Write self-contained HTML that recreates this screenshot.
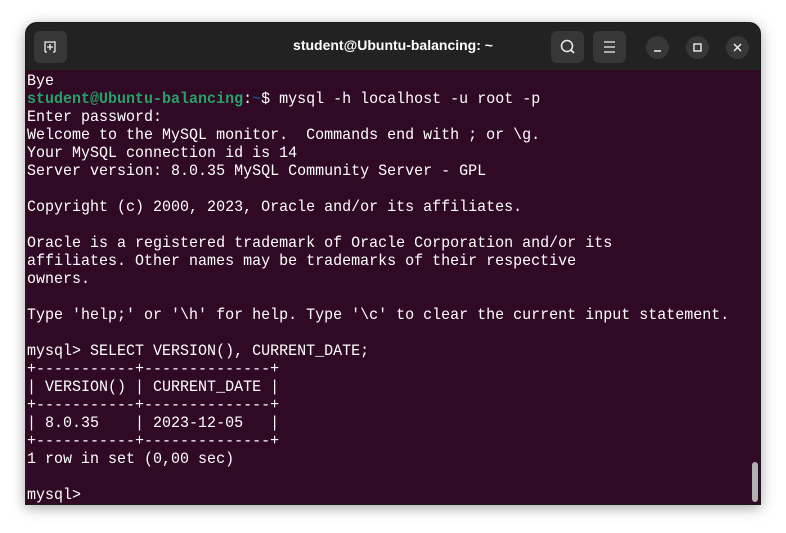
<!DOCTYPE html>
<html><head><style>
html,body{margin:0;padding:0;background:#fff;width:786px;height:533px;overflow:hidden}
.win{position:absolute;left:25px;top:22px;width:736px;height:483px;border-radius:12px 12px 0 0;background:#300a24;box-shadow:0 3px 14px rgba(0,0,0,.35);overflow:hidden;border:1px solid #1a1a1a;box-sizing:border-box}
.hdr{position:absolute;left:0;top:0;right:0;height:47px;background:#222}
.btn{position:absolute;top:8px;width:33px;height:32px;background:#373737;border-radius:6px}
.cb{position:absolute;top:13px;width:23px;height:23px;border-radius:50%;background:#373737}
.title{position:absolute;left:0;right:0;top:14px;text-align:center;color:#fff;font:bold 14px "Liberation Sans",sans-serif}
pre{position:absolute;left:1px;top:49px;margin:0;color:#fff;font:15.55px/18px "Liberation Mono",monospace;transform:scaleX(0.965);transform-origin:0 0}
.g{color:#26a269;font-weight:bold}.b{color:#12488b;font-weight:bold}
.sb{position:absolute;left:726px;top:439px;width:6px;height:40px;border-radius:3px;background:#b0b0b0}
</style></head><body>
<div class="win">
<div class="hdr">
<div class="btn" style="left:8px"><svg width="33" height="32"><path d="M11 21 L11 11 L21 11 L21 21 M13 21 L11 21 M21 21 L19 21 M16 13 V19 M13 16 H19" stroke="#eee" stroke-width="1.3" fill="none"/></svg></div>
<div class="title">student@Ubuntu-balancing: ~</div>
<div class="btn" style="left:525px"><svg width="33" height="32"><circle cx="16" cy="15" r="5.5" stroke="#eee" stroke-width="1.5" fill="none"/><path d="M20 19 L23 22" stroke="#eee" stroke-width="1.6"/></svg></div>
<div class="btn" style="left:567px"><svg width="33" height="32"><path d="M11 11H22M11 16H22M11 21H22" stroke="#eee" stroke-width="1.3"/></svg></div>
<div class="cb" style="left:620px"><svg width="23" height="23"><path d="M8 15H15" stroke="#eee" stroke-width="1.5"/></svg></div>
<div class="cb" style="left:660px"><svg width="23" height="23"><rect x="8" y="8" width="7" height="7" stroke="#eee" stroke-width="1.4" fill="none"/></svg></div>
<div class="cb" style="left:700px"><svg width="23" height="23"><path d="M8 8L15 15M15 8L8 15" stroke="#eee" stroke-width="1.5"/></svg></div>
</div>
<pre>Bye
<span class="g">student@Ubuntu-balancing</span>:<span class="b">~</span>$ mysql -h localhost -u root -p
Enter password: 
Welcome to the MySQL monitor.  Commands end with ; or \g.
Your MySQL connection id is 14
Server version: 8.0.35 MySQL Community Server - GPL

Copyright (c) 2000, 2023, Oracle and/or its affiliates.

Oracle is a registered trademark of Oracle Corporation and/or its
affiliates. Other names may be trademarks of their respective
owners.

Type 'help;' or '\h' for help. Type '\c' to clear the current input statement.

mysql&gt; SELECT VERSION(), CURRENT_DATE;
+-----------+--------------+
| VERSION() | CURRENT_DATE |
+-----------+--------------+
| 8.0.35    | 2023-12-05   |
+-----------+--------------+
1 row in set (0,00 sec)

mysql&gt; </pre>
<div class="sb"></div>
</div>
</body></html>
